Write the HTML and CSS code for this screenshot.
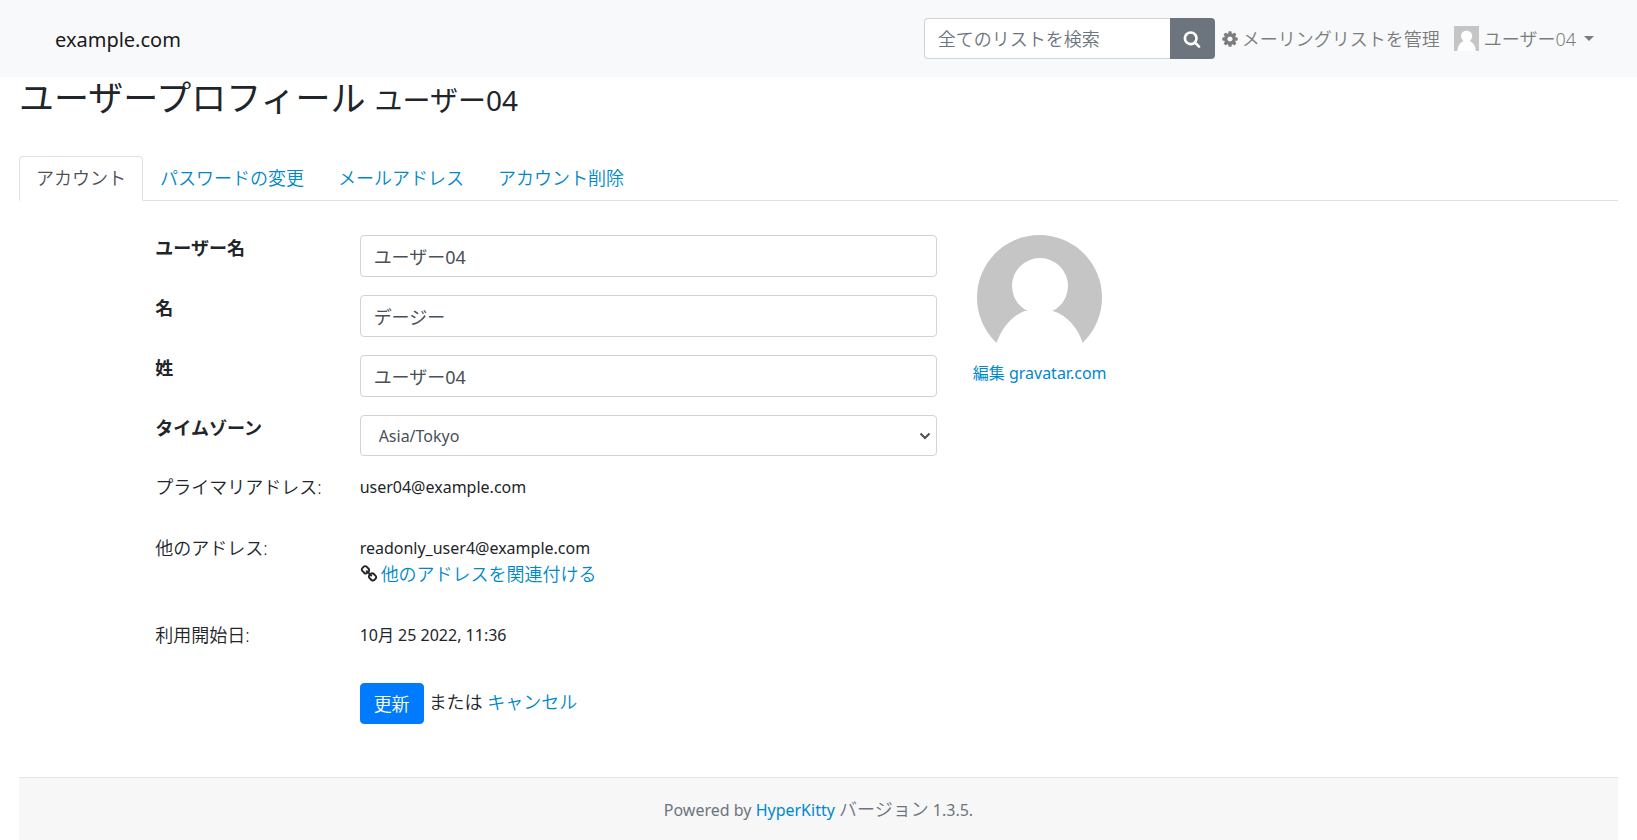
FILE: index.html
```html
<!DOCTYPE html>
<html lang="ja">
<head>
<meta charset="utf-8">
<meta name="viewport" content="width=device-width, initial-scale=1">
<title>ユーザープロフィール</title>
<link rel="stylesheet" href="styles.css">
</head>
<body>
<header class="navbar">
  <a class="brand" href="#">example.com</a>
  <form class="search" role="search">
    <input class="search-input" type="search" placeholder="全てのリストを検索" aria-label="全てのリストを検索">
    <button class="search-button" type="submit" aria-label="検索">
      <svg class="icon" viewBox="0 0 1792 1792" aria-hidden="true"><path d="M1216 832q0-185-131.500-316.500t-316.500-131.500-316.500 131.500-131.500 316.500 131.500 316.500 316.500 131.500 316.500-131.500 131.500-316.500zm512 832q0 52-38 90t-90 38q-54 0-90-38l-343-342q-179 124-399 124-143 0-273.500-55.500t-225-150-150-225-55.500-273.500 55.500-273.500 150-225 225-150 273.500-55.500 273.500 55.500 225 150 150 225 55.500 273.500q0 220-124 399l343 343q37 37 37 90z"/></svg>
    </button>
  </form>
  <nav class="nav">
    <a class="nav-link" href="#">
      <svg class="icon" viewBox="0 0 1792 1792" aria-hidden="true"><path d="M1152 896q0-106-75-181t-181-75-181 75-75 181 75 181 181 75 181-75 75-181zm512-109v222q0 12-8 23t-20 13l-185 28q-19 54-39 91 35 50 107 138 10 12 10 25t-9 23q-27 37-99 108t-94 71q-12 0-26-9l-138-108q-44 23-91 38-16 136-29 186-7 28-36 28h-222q-14 0-24.500-8.500t-11.500-21.500l-28-184q-49-16-90-37l-141 107q-10 9-25 9-14 0-25-11-126-114-165-168-7-10-7-23 0-12 8-23 15-21 51-66.500t54-70.500q-27-50-41-99l-183-27q-13-2-21-12.500t-8-23.500v-222q0-12 8-23t19-13l186-28q14-46 39-92-40-57-107-138-10-12-10-24 0-10 9-23 26-36 98.500-107.500t94.500-71.500q13 0 26 10l138 107q44-23 91-38 16-136 29-186 7-28 36-28h222q14 0 24.500 8.500t11.500 21.500l28 184q49 16 90 37l142-107q9-9 24-9 13 0 25 10 129 119 165 170 7 8 7 22 0 12-8 23-15 21-51 66.500t-54 70.500q26 50 41 98l183 28q13 2 21 12.500t8 23.500z"/></svg>
      <span>メーリングリストを管理</span>
    </a>
    <a class="nav-link" href="#">
      <svg class="avatar-small" viewBox="0 0 125 125" aria-hidden="true"><rect width="125" height="125" fill="#c5c5c5"/><circle cx="63" cy="51" r="28" fill="#fff"/><ellipse cx="63" cy="127" rx="46" ry="55" fill="#fff"/></svg>
      <span>ユーザー04</span>
      <span class="caret"></span>
    </a>
  </nav>
</header>

<main class="container">
  <h1 class="title">ユーザープロフィール <small class="subtitle">ユーザー04</small></h1>

  <nav class="tabs">
    <a class="tab tab-active" href="#">アカウント</a>
    <a class="tab" href="#">パスワードの変更</a>
    <a class="tab" href="#">メールアドレス</a>
    <a class="tab" href="#">アカウント削除</a>
  </nav>

  <div class="profile">
    <form class="form">
      <div class="row">
        <label class="label" for="username">ユーザー名</label>
        <div class="field"><input class="control" id="username" type="text" value="ユーザー04"></div>
      </div>
      <div class="row">
        <label class="label" for="first-name">名</label>
        <div class="field"><input class="control" id="first-name" type="text" value="デージー"></div>
      </div>
      <div class="row">
        <label class="label" for="last-name">姓</label>
        <div class="field"><input class="control" id="last-name" type="text" value="ユーザー04"></div>
      </div>
      <div class="row">
        <label class="label" for="timezone">タイムゾーン</label>
        <div class="field">
          <select class="control select" id="timezone"><option>Asia/Tokyo</option></select>
          <svg class="chevron" viewBox="0 0 12 8" aria-hidden="true"><path d="M1.500 1.500 6 6l4.500-4.500"/></svg>
        </div>
      </div>
      <div class="row row-text">
        <div class="term">プライマリアドレス:</div>
        <div class="field latin">user04@example.com</div>
      </div>
      <div class="row row-text">
        <div class="term">他のアドレス:</div>
        <div class="field">
          <div class="latin">readonly_user4@example.com</div>
          <div class="associate">
            <svg class="icon" viewBox="0 0 1792 1792" aria-hidden="true"><path d="M1520 1216q0-40-28-68l-208-208q-28-28-68-28-42 0-72 32 3 3 19 18.500t21.500 21.500 15 19 13 25.500 3.500 27.500q0 40-28 68t-68 28q-15 0-27.500-3.500t-25.500-13-19-15-21.500-21.500-18.500-19q-33 31-33 73 0 40 28 68l206 207q27 27 68 27 40 0 68-26l147-146q28-28 28-67zm-703-705q0-40-28-68l-206-207q-28-28-68-28-39 0-68 27l-147 146q-28 28-28 67 0 40 28 68l208 208q27 27 68 27 42 0 72-31-3-3-19-18.500t-21.500-21.500-15-19-13-25.500-3.500-27.500q0-40 28-68t68-28q15 0 27.500 3.500t25.500 13 19 15 21.500 21.500 18.500 19q33-31 33-73zm895 705q0 120-85 203l-147 146q-83 83-203 83-121 0-204-85l-206-207q-83-83-83-203 0-123 88-209l-88-88q-86 88-208 88-120 0-204-84l-208-208q-84-84-84-204t85-203l147-146q83-83 203-83 121 0 204 85l206 207q83 83 83 203 0 123-88 209l88 88q86-88 208-88 120 0 204 84l208 208q84 84 84 204z"/></svg>
            <a class="link" href="#">他のアドレスを関連付ける</a>
          </div>
        </div>
      </div>
      <div class="row row-text">
        <div class="term">利用開始日:</div>
        <div class="field latin">10月 25 2022, 11:36</div>
      </div>
      <div class="row row-actions">
        <div class="field actions">
          <button class="submit" type="submit">更新</button>
          <span class="alternative">または <a class="link" href="#">キャンセル</a></span>
        </div>
      </div>
    </form>

    <aside class="gravatar">
      <svg class="avatar" viewBox="0 0 125 125" role="img" aria-label="アバター">
        <defs><clipPath id="round"><path d="M0 0H125V108H0z"/></clipPath></defs>
        <g clip-path="url(#round)">
          <circle cx="62.500" cy="62.500" r="62.500" fill="#c5c5c5"/>
          <circle cx="63" cy="51" r="28" fill="#fff"/>
          <path d="M19 109C25 92 36 80 48 76h28C89 80 101 92 106 109z" fill="#fff"/>
        </g>
      </svg>
      <a class="link gravatar-link" href="#">編集 gravatar.com</a>
    </aside>
  </div>

  <footer class="footer">Powered by <a class="link" href="#">HyperKitty</a> <span class="version">バージョン</span> 1.3.5.</footer>
</main>
</body>
</html>
```

FILE: styles.css
```css
*, *::before, *::after { box-sizing: border-box; }

body {
  margin: 0;
  background: #fff;
  color: #212529;
  font-family: "Noto Sans", "Noto Sans CJK JP", sans-serif;
  font-size: 18px;
  font-weight: 350;
  line-height: 26px;
}

a { text-decoration: none; }
input, select, button { margin: 0; font: inherit; }

.icon { width: 18px; height: 18px; fill: currentColor; flex: none; }
.link { color: #0088cc; }
.latin { font-size: 16px; font-weight: 400; }

/* Top bar */
.navbar {
  display: flex;
  align-items: center;
  min-height: 77px;
  padding: 0 43px 0 55px;
  background: #f8f9fa;
}
.brand { margin-right: auto; padding-top: 2px; color: #1a1a1a; font-size: 20px; font-weight: 400; }
.search { display: flex; }
.search-input {
  width: 246px;
  height: 41px;
  padding: 0 13px;
  border: 1px solid #ced4da;
  border-right: 0;
  border-radius: 4px 0 0 4px;
  background: #fff;
  color: #495057;
  appearance: none;
}
.search-input::placeholder { color: #6c757d; opacity: 1; }
.search-button {
  display: flex;
  align-items: center;
  justify-content: center;
  width: 45px;
  height: 41px;
  padding: 0;
  border: 0;
  border-radius: 0 4px 4px 0;
  background: #6c757d;
  color: #fff;
}
.nav { display: flex; gap: 14px; margin-left: 6px; }
.nav-link { display: flex; align-items: center; gap: 3px; color: #7c7c7d; }
.avatar-small { width: 25px; height: 25px; margin-right: 2px; }
.caret {
  margin-left: 5px;
  border-top: 5px solid currentColor;
  border-right: 5px solid transparent;
  border-left: 5px solid transparent;
}

/* Heading and tabs */
.container { padding: 0 19px; }
.title { margin: 0 0 35px; font-size: 35px; font-weight: 400; line-height: 42px; }
.subtitle { font-size: 28px; }
.tabs { display: flex; border-bottom: 1px solid #dee2e6; }
.tab {
  margin-bottom: -1px;
  padding: 8px 16px 9px;
  border: 1px solid transparent;
  border-radius: 4px 4px 0 0;
  color: #0088cc;
}
.tab-active { border-color: #dee2e6 #dee2e6 #fff; background: #fff; color: #495057; }

/* Profile */
.profile {
  display: grid;
  grid-template-columns: repeat(12, 1fr);
  column-gap: 36px;
  padding: 34px 0 53px;
}
.form { grid-column: 2 / span 6; }
.row {
  display: grid;
  grid-template-columns: repeat(12, 1fr);
  column-gap: 36px;
  align-items: start;
  margin-bottom: 18px;
}
.row-text { margin-bottom: 35px; }
.row-actions { margin-bottom: 0; }
.label, .term { grid-column: 1 / span 3; white-space: nowrap; }
.label { font-weight: 700; }
.field { grid-column: 4 / span 9; position: relative; }
.control {
  display: block;
  width: 100%;
  height: 42px;
  padding: 0 13px;
  border: 1px solid #ced4da;
  border-radius: 4px;
  background: #fff;
  color: #495057;
  font-weight: 400;
}
.select { height: 41px; padding: 0 18px; font-size: 16px; appearance: none; }
.chevron {
  position: absolute;
  top: 17px;
  right: 6px;
  width: 12px;
  height: 8px;
  fill: none;
  stroke: #495057;
  stroke-width: 2;
  pointer-events: none;
}
.associate { display: flex; align-items: center; gap: 3px; }
.actions { display: flex; align-items: center; gap: 5px; }
.alternative { padding-bottom: 4px; }
.submit {
  height: 41px;
  padding: 0 13px;
  border: 1px solid #007bff;
  border-radius: 4px;
  background: #007bff;
  color: #fff;
}
.gravatar {
  grid-column: 8 / span 3;
  justify-self: start;
  display: flex;
  flex-direction: column;
  align-items: center;
}
.avatar { width: 125px; height: 125px; }
.gravatar-link { font-size: 16px; font-weight: 400; }

/* Footer */
.footer {
  padding: 18px;
  border-top: 1px solid #e5e5e5;
  background: #f7f7f7;
  color: #6c757d;
  font-size: 16px;
  font-weight: 400;
  text-align: center;
}
.version { font-size: 18px; font-weight: 350; }
```
